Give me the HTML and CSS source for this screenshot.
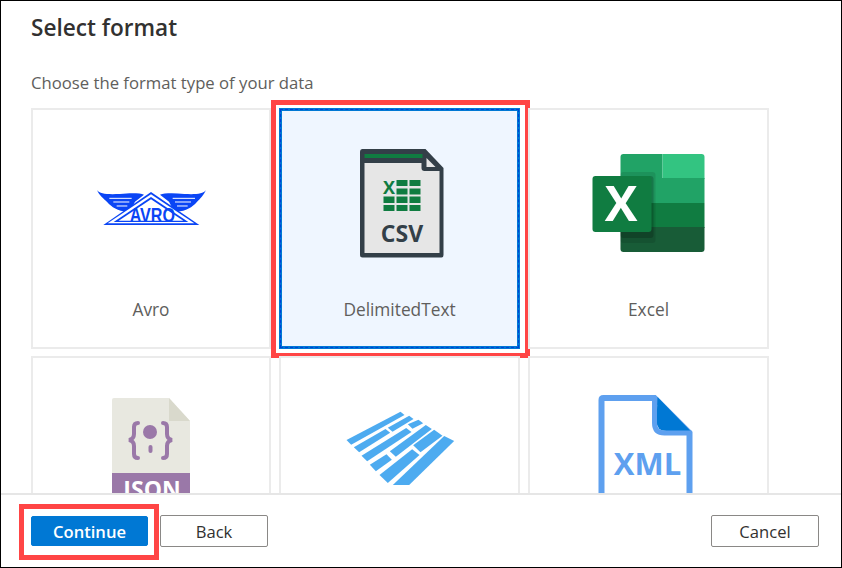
FILE: index.html
```html
<!DOCTYPE html>
<html lang="en">
<head>
<meta charset="utf-8">
<title>Select format</title>
<link rel="stylesheet" href="styles.css">
</head>
<body>
<div class="dialog">
  <main class="main">
    <h1 class="title">Select format</h1>
    <p class="subtitle">Choose the format type of your data</p>
    <div class="grid">
      <div class="tile">
        <svg class="icon" viewBox="91 145 120 120" aria-hidden="true">
          <g transform="translate(20 100) scale(.33333)" fill="#0a45f5">
            <path d="M231 270 C240 283 262 283 300 282 C330 279 360 279 372 284 L345 305 L330 334 C300 338 275 322 262 307 C250 294 238 287 231 270Z"/>
            <path d="M558 270 C549 283 527 283 493 282 C463 279 433 279 420 284 L447 305 L462 334 C492 338 517 322 530 307 C542 294 550 287 558 270Z"/>
            <path d="M268 295 H335 M280 306 H328 M290 318 H322 M525 295 H458 M513 306 H465 M503 318 H471" stroke="#fff" stroke-width="3" fill="none"/>
            <path d="M393 276 L538 375 H250Z"/>
            <path d="M393 283 L523 370 H263Z" fill="#fff"/>
            <path d="M393 291 L505 366 H281Z"/>
            <path d="M393 298 L490 362 H296Z" fill="#fff"/>
            <text class="avro" x="397" y="365" textLength="136" lengthAdjust="spacingAndGlyphs">AVRO</text>
          </g>
        </svg>
        <span class="label">Avro</span>
      </div>
      <div class="tile tile-selected">
        <svg class="icon" viewBox="339.500 145 120 120" aria-hidden="true">
          <path d="M362 149 H425 L443 168 V255 Q443 257.500 441 257.500 H362 Q359.500 257.500 359.500 255 V152 Q359.500 149 362 149Z" fill="#333f48"/>
          <path d="M364 163 H421 V168 Q421 171 424 171 H439 V253 H364Z" fill="#e6e6e6"/>
          <path d="M364 154 H422 V158 H364Z" fill="#107c41"/>
          <path d="M426 158 L435 167 H426Z" fill="#e6e6e6"/>
          <g fill="#107c41">
            <rect x="396" y="180" width="11" height="6"/><rect x="409" y="180" width="11" height="6"/>
            <rect x="396" y="188.500" width="11" height="6"/><rect x="409" y="188.500" width="11" height="6"/>
            <rect x="383" y="196.500" width="11" height="6.500"/><rect x="396" y="196.500" width="11" height="6.500"/><rect x="409" y="196.500" width="11" height="6.500"/>
            <rect x="383" y="205" width="11" height="6"/><rect x="396" y="205" width="11" height="6"/><rect x="409" y="205" width="11" height="6"/>
            <text class="glyph-bold" x="388.500" y="194" font-size="18" text-anchor="middle">X</text>
          </g>
          <text class="glyph-bold" x="401.500" y="242" font-size="23" text-anchor="middle" fill="#333f48">CSV</text>
        </svg>
        <span class="label">DelimitedText</span>
      </div>
      <div class="tile">
        <svg class="icon" viewBox="588.500 145 120 120" aria-hidden="true">
          <path d="M623 154 H662 V179 H620 V157 Q620 154 623 154Z" fill="#21a366"/>
          <path d="M662 154 H701 Q704 154 704 157 V179 H662Z" fill="#33c481"/>
          <rect x="620" y="178" width="84" height="25" fill="#21a366"/>
          <rect x="620" y="203" width="84" height="25" fill="#107c41"/>
          <path d="M620 227 H704 V249 Q704 252 701 252 H623 Q620 252 620 249Z" fill="#185c37"/>
          <rect x="620" y="172" width="35" height="71" rx="3" fill="#000" opacity=".1"/>
          <rect x="620" y="176" width="33" height="62" rx="3" fill="#000" opacity=".18"/>
          <rect x="592" y="176" width="59" height="56" rx="3" fill="#107c41"/>
          <text class="glyph-bold" x="620.500" y="221" font-size="49" text-anchor="middle" fill="#fff">X</text>
        </svg>
        <span class="label">Excel</span>
      </div>
      <div class="tile">
        <svg class="icon" viewBox="91 393 120 120" aria-hidden="true">
          <path d="M114 398 H169 L190 421 V520 H112 V400 Q112 398 114 398Z" fill="#e8e8e0"/>
          <path d="M169 398 L190 421 H169Z" fill="#d9d9cc"/>
          <rect x="112" y="473" width="78" height="40" fill="#9a78a8"/>
          <text class="glyph-bold" x="152" y="497.500" font-size="23" text-anchor="middle" fill="#fff">JSON</text>
          <circle cx="150" cy="432" r="7" fill="#9a78a8"/>
          <rect x="148.500" y="445" width="4" height="8" rx="2" fill="#9a78a8"/>
          <path d="M138 423 Q134 423 134 427 V434 Q134 439 129 440 Q134 441 134 446 V454 Q134 458 138 458 M163 423 Q167 423 167 427 V434 Q167 439 172 440 Q167 441 167 446 V454 Q167 458 163 458" fill="none" stroke="#9a78a8" stroke-width="4" stroke-linecap="round"/>
        </svg>
      </div>
      <div class="tile">
        <svg class="icon" viewBox="339.500 393 120 120" aria-hidden="true">
          <g transform="translate(330 395) scale(.33333)" fill="#4dabf0">
            <path d="M48 135 L210 50 L222 60 L62 149Z"/>
            <path d="M70 157 L165 102 L179 113 L86 172Z"/>
            <path d="M172 98 L236 62 L249 72 L186 110Z"/>
            <path d="M232 88 L264 74 L278 85 L246 101Z"/>
            <path d="M93 182 L227 99 L243 111 L110 199Z"/>
            <path d="M118 209 L168 178 L184 194 L136 229Z"/>
            <path d="M178 169 L286 90 L304 102 L196 185Z"/>
            <path d="M248 151 L311 104 L336 122 L270 172Z"/>
            <path d="M147 240 L245 163 L267 180 L172 264Z"/>
            <path d="M187 270 L341 123 L371 138 L236 270Z"/>
          </g>
        </svg>
      </div>
      <div class="tile">
        <svg class="icon" viewBox="588.500 393 120 120" aria-hidden="true">
          <path d="M603 398 H654 L689 433 V520 H601 V400 Q601 398 603 398Z" fill="#fff" stroke="#5ea0ef" stroke-width="6"/>
          <path d="M657 397 L690 431 H666 Q656 431 656 421Z" fill="#0078d4"/>
          <path d="M654 396 V423 Q654 433 664 433 H691" fill="none" stroke="#5ea0ef" stroke-width="5"/>
          <text class="glyph-bold" x="647" y="475" font-size="31" text-anchor="middle" fill="#5ea0ef">XML</text>
        </svg>
      </div>
    </div>
  </main>
  <footer class="footer">
    <div class="footer-left">
      <button class="btn btn-primary" type="button">Continue</button>
      <button class="btn btn-secondary" type="button">Back</button>
    </div>
    <button class="btn btn-secondary" type="button">Cancel</button>
  </footer>
</div>
</body>
</html>
```
FILE: styles.css
```css
* {
  box-sizing: border-box;
}

html,
body {
  margin: 0;
  padding: 0;
}

body {
  background: #fff;
  font-family: "Open Sans", "Noto Sans", sans-serif;
  color: #323130;
}

.dialog {
  width: 842px;
  height: 568px;
  border: 1px solid #000;
  display: flex;
  flex-direction: column;
  overflow: hidden;
  background: #fff;
}

.main {
  flex: 1 1 auto;
  min-height: 0;
  overflow: hidden;
  padding: 0 0 0 30px;
}

.title {
  margin: 0;
  padding-top: 10px;
  font-size: 22.6px;
  line-height: 34px;
  font-weight: 600;
  color: #323130;
}

.subtitle {
  margin: 0;
  padding-top: 27px;
  font-size: 16.7px;
  line-height: 22px;
  color: #605e5c;
}

.grid {
  margin-top: 14px;
  display: grid;
  grid-template-columns: 240px 241px 241px;
  grid-auto-rows: 241px;
  gap: 7px 8px;
}

.tile {
  position: relative;
  display: flex;
  flex-direction: column;
  align-items: center;
  padding-top: 35px;
  border: 2px solid #ebebeb;
}

.tile-selected {
  background: #eff6ff;
  border: 3px solid #0078d4;
  outline: 1px dashed #0040d8;
  outline-offset: -2px;
  padding-top: 34px;
}

.tile-selected::after {
  content: "";
  position: absolute;
  top: -11px;
  left: -11px;
  right: -13px;
  bottom: -12px;
  border: 5px solid #ff4545;
  pointer-events: none;
}

.icon {
  display: block;
  width: 120px;
  height: 120px;
  flex: none;
}

.label {
  margin-top: 34px;
  font-size: 17.3px;
  line-height: 22px;
  color: #605e5c;
}

.avro {
  font-family: "Liberation Sans", sans-serif;
  font-size: 60px;
  font-weight: 700;
  text-anchor: middle;
}

.glyph-bold {
  font-family: "Open Sans", sans-serif;
  font-weight: 700;
}

.footer {
  flex: none;
  height: 74px;
  border-top: 2px solid #e6e6e6;
  padding: 20px 22px 0 30px;
  display: flex;
  justify-content: space-between;
  align-items: flex-start;
}

.footer-left {
  display: flex;
  gap: 12px;
  align-items: center;
}

.btn {
  height: 32px;
  border: 1px solid #8a8886;
  border-radius: 2px;
  background: #fff;
  color: #323130;
  font: 600 16.6px/1 "Open Sans", sans-serif;
  padding: 2px 0 0;
}

.btn-secondary {
  width: 108px;
  font-weight: 500;
}

.btn-primary {
  position: relative;
  width: 117px;
  height: 30px;
  background: #0078d4;
  border-color: #0078d4;
  color: #fff;
}

.btn-primary::after {
  content: "";
  position: absolute;
  top: -13px;
  left: -13px;
  right: -12px;
  bottom: -15px;
  border: 5px solid #ff4545;
  pointer-events: none;
}
```
